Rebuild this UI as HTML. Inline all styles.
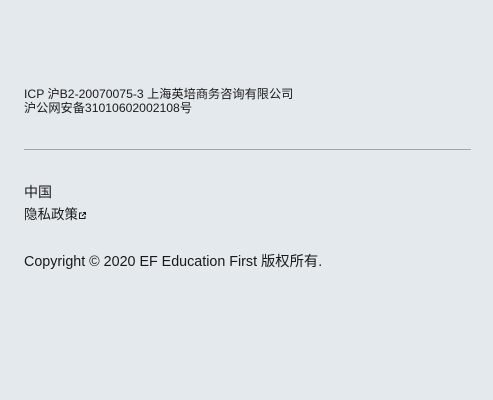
<!DOCTYPE html>
<html><head><meta charset="utf-8"><style>
html,body{margin:0;padding:0;}
body{width:493px;height:400px;background:#e4e9ed;font-family:"Liberation Sans","Noto Sans CJK SC",sans-serif;color:#191919;position:relative;overflow:hidden}
.a{position:absolute;left:24px;white-space:nowrap}
.s{font-size:12.2px;line-height:14px}
hr{position:absolute;left:24px;top:149px;width:447px;margin:0;border:0;height:1px;background:#a3a6a9}
</style></head><body>
<div class="a s" style="top:87px">ICP 沪B2-20070075-3 上海英培商务咨询有限公司<br>沪公网安备31010602002108号</div>
<hr>
<div class="a" style="top:182px;font-size:14px">中国</div>
<div class="a" style="top:203px;font-size:13.5px">隐私政策<svg width="7" height="7" viewBox="0 0 7 7" style="margin-left:1px"><path d="M3 1H0.5V6.5H6V4M4 0.5H6.5V3M6.5 0.5L3 4" fill="none" stroke="#191919" stroke-width="1"/></svg></div>
<div class="a" style="top:250px;font-size:14.3px">Copyright © 2020 EF Education First 版权所有.</div>
</body></html>
